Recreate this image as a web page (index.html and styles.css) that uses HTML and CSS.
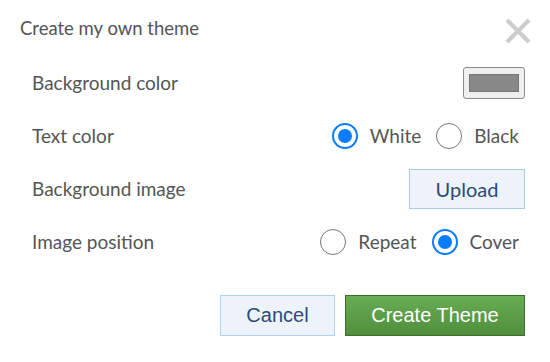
FILE: index.html
```html
<!DOCTYPE html>
<html>
<head>
<meta charset="utf-8">
<link rel="stylesheet" href="styles.css">
</head>
<body>
<div class="dialog">
  <div class="header">
    <div class="title">Create my own theme</div>
    <button class="close" aria-label="Close">
      <svg width="28" height="28" viewBox="0 0 28 28"><path d="M3 3 L25 25 M25 3 L3 25" stroke="#cccccc" stroke-width="4.2" fill="none"/></svg>
    </button>
  </div>
  <div class="row">
    <div class="label">Background color</div>
    <div class="swatch"><div class="swatch-inner"></div></div>
  </div>
  <div class="row">
    <div class="label">Text color</div>
    <div class="options">
      <label class="opt"><span class="radio checked"></span>White</label>
      <label class="opt"><span class="radio"></span>Black</label>
    </div>
  </div>
  <div class="row">
    <div class="label">Background image</div>
    <button class="upload">Upload</button>
  </div>
  <div class="row">
    <div class="label">Image position</div>
    <div class="options">
      <label class="opt"><span class="radio"></span>Repeat</label>
      <label class="opt"><span class="radio checked"></span>Cover</label>
    </div>
  </div>
  <div class="footer">
    <button class="btn cancel">Cancel</button>
    <button class="btn create">Create Theme</button>
  </div>
</div>
</body>
</html>
```
FILE: styles.css
```css
html, body {
  margin: 0;
  padding: 0;
  background: #ffffff;
}
.dialog {
  width: 550px;
  height: 362px;
  box-sizing: border-box;
  font-family: Lato, "Open Sans", sans-serif;
  color: #555555;
}
.header {
  height: 56px;
  display: flex;
  align-items: center;
  justify-content: space-between;
  padding: 0 18px 0 20px;
}
.title {
  font-size: 18.5px;
  margin-top: -1px;
}
.close {
  border: 0;
  background: none;
  padding: 0;
  width: 28px;
  height: 28px;
  margin-top: 5px;
}
.close svg { display: block; }
.row {
  height: 53px;
  display: flex;
  align-items: center;
  justify-content: space-between;
  padding: 0 25px 0 32px;
}
.label {
  font-size: 19px;
}
.swatch {
  width: 62px;
  height: 32px;
  box-sizing: border-box;
  border: 1px solid #8a8a8a;
  border-radius: 3px;
  background: #efefef;
  display: flex;
  align-items: center;
  justify-content: center;
}
.swatch-inner {
  width: 50px;
  height: 18px;
  box-sizing: border-box;
  background: #888888;
  border: 1px solid #777777;
}
.options {
  display: flex;
  align-items: center;
  gap: 15px;
  margin-right: 6px;
}
.opt {
  display: flex;
  align-items: center;
  gap: 12px;
  font-size: 19px;
  color: #555555;
}
.radio {
  width: 26px;
  height: 26px;
  box-sizing: border-box;
  border-radius: 50%;
  border: 1.5px solid #767676;
  background: #fff;
  position: relative;
}
.radio.checked {
  border: 2px solid #0a7cff;
}
.radio.checked::after {
  content: "";
  position: absolute;
  left: 4px;
  top: 4px;
  width: 14px;
  height: 14px;
  border-radius: 50%;
  background: #0a7cff;
}
.upload {
  width: 116px;
  height: 40px;
  box-sizing: border-box;
  border: 1px solid #a8cbe8;
  background: #edf3f8;
  color: #2c4a78;
  font-family: Lato, "Open Sans", sans-serif;
  font-size: 20px;
  padding: 0;
}
.footer {
  display: flex;
  justify-content: flex-end;
  gap: 10px;
  padding: 27px 25px 0 0;
}
.btn {
  height: 41px;
  box-sizing: border-box;
  font-family: "Liberation Sans", Arial, sans-serif;
  font-size: 20px;
  padding: 0;
}
.cancel {
  width: 115px;
  border: 1px solid #b0d2ef;
  background: #edf3f8;
  color: #2c4a78;
}
.create {
  width: 180px;
  border: 1px solid #3b6f2a;
  background: linear-gradient(#67ad53, #508e3d);
  color: #ffffff;
}
```
